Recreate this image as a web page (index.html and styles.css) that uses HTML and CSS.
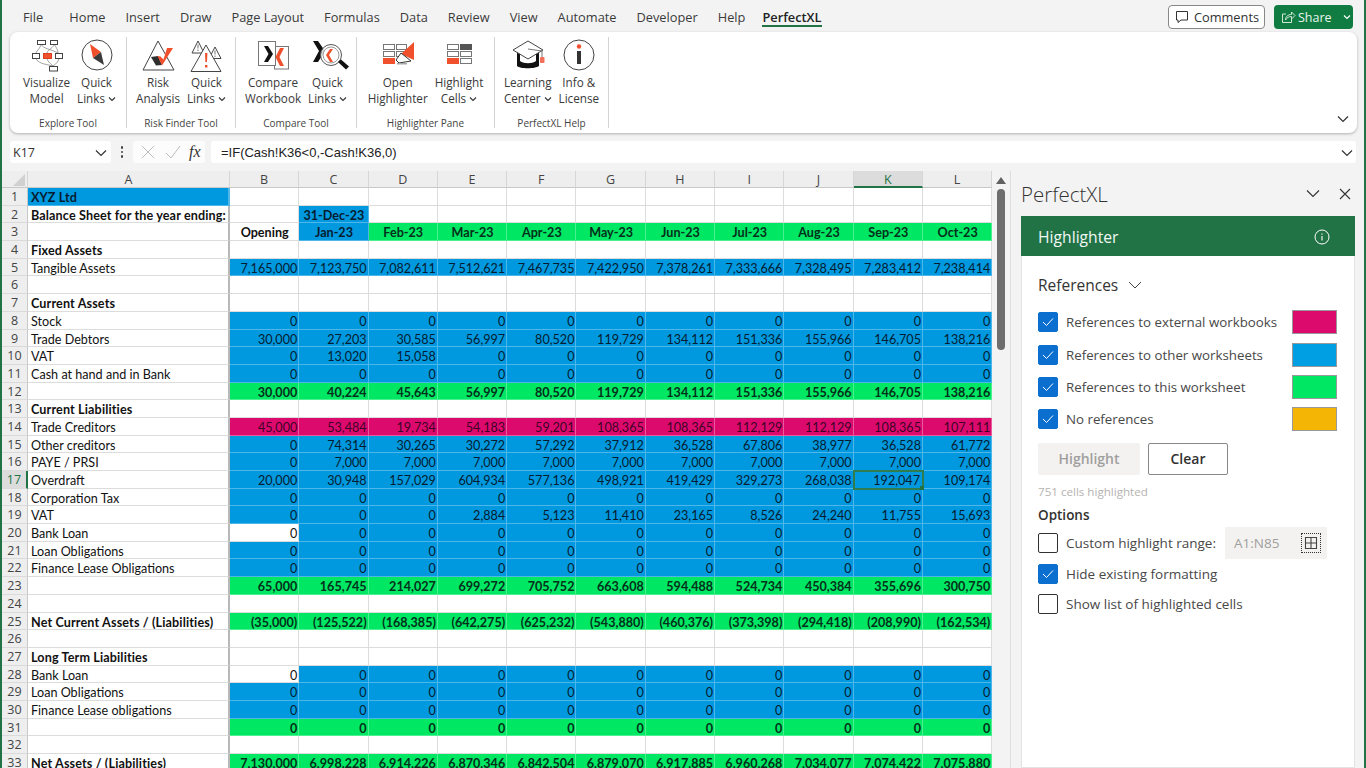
FILE: index.html
```html
<!DOCTYPE html>
<html lang="en">
<head>
<meta charset="utf-8">
<title>PerfectXL Highlighter</title>
<link rel="stylesheet" href="styles.css">
</head>
<body>
<div class="app">
  <header class="tabbar">
    <nav class="tabs">
      <span class="tab tab-file">File</span><span class="tab">Home</span><span class="tab">Insert</span><span class="tab">Draw</span><span class="tab">Page Layout</span><span class="tab">Formulas</span><span class="tab">Data</span><span class="tab">Review</span><span class="tab">View</span><span class="tab">Automate</span><span class="tab">Developer</span><span class="tab">Help</span><span class="tab tab-on">PerfectXL</span>
    </nav>
    <div class="actions">
      <button class="btn-comments"><svg class="ic" width="16" height="16" viewBox="0 0 16 16"><path d="M2.5 2.5h11v8.5H7l-3 2.6V11H2.5z" fill="none" stroke="#333" stroke-width="1"/></svg>Comments</button>
      <button class="btn-share"><svg class="ic" width="16" height="16" viewBox="0 0 16 16"><path d="M6 5H2.5v8.5h9V10M5.5 11c0-3.5 2.5-5.5 6-5.5V3l3.5 3.5L11.500 10V7.500c-2.500 0-4.500 1-6 3.500z" fill="none" stroke="#cfe8da" stroke-width="1"/></svg>Share<svg class="share-chev" width="8" height="6" viewBox="0 0 8 6"><path d="M1 1.500l3 3 3-3" fill="none" stroke="#fff" stroke-width="1.200"/></svg></button>
    </div>
  </header>

  <section class="ribbon">
    <div class="group g1">
      <div class="btns">
        <div class="rb">
          <svg class="ri" width="36" height="36" viewBox="0 0 36 36" fill="none" stroke="#444" stroke-width="1">
            <path d="M12 6C11 11 8 12 7 15M25 6c0 4-6 5-7 9M12 6c2 5 10 5 17 9M25 6c2 3 4 6 4 9M7 20c1 5 8 6 17 8M18 20c0 3 3 5 6 8M30 20c0 3-3 6-6 8" stroke="#888" stroke-width=".8"/>
            <rect x="8.500" y="2.500" width="8" height="4" fill="#fff"/><rect x="21.500" y="2.500" width="7" height="4" fill="#fff"/>
            <rect x="3.500" y="15.500" width="7" height="5" fill="#fff"/><rect x="14.500" y="15.500" width="8" height="5" fill="#f0512c" stroke="#d8401f"/><rect x="26.500" y="15.500" width="7" height="5" fill="#fff"/>
            <rect x="20.500" y="28.500" width="8" height="4.500" fill="#fff"/>
          </svg>
          <span>Visualize<br>Model</span>
        </div>
        <div class="rb">
          <svg class="ri" width="36" height="36" viewBox="0 0 36 36"><circle cx="18" cy="17" r="15" fill="#fff" stroke="#444" stroke-width="1"/><path d="M11 6l11 8-8 6z" fill="#f0512c"/><path d="M14 20l8-6 3 13z" fill="#3c3c3c"/></svg>
          <span>Quick<br>Links <svg class="cv" width="8" height="6" viewBox="0 0 8 6"><path d="M1 1.500l3 3 3-3" fill="none" stroke="#333" stroke-width="1.100"/></svg></span>
        </div>
      </div>
      <div class="glabel">Explore Tool</div>
    </div>
    <div class="group g2">
      <div class="btns">
        <div class="rb">
          <svg class="ri" width="36" height="36" viewBox="0 0 36 36"><path d="M18 3L3 32h31z" fill="#fff" stroke="#444" stroke-width="1"/><path d="M11 19l7-1 4 9-6 .5z" fill="#2f2f2f"/><path d="M22 27.500L17.500 18l3 .5 3 3L27 10h6z" fill="#f0512c"/></svg>
          <span>Risk<br>Analysis</span>
        </div>
        <div class="rb">
          <svg class="ri" width="36" height="36" viewBox="0 0 36 36" fill="#fff" stroke="#444" stroke-width="1"><path d="M10 3L4 15h12z"/><path d="M27 9l-6 11.500h12z"/><path d="M18 7L3 33.500h30z"/><path d="M17 15h2.400l-.4 9h-1.600zM17 27h2.400v2.500H17z" fill="#f0512c" stroke="none"/><path d="M9.500 6.500h1v4h-1zM9.500 11.500h1v1.500h-1zM26.500 12.500h1v4h-1zM26.500 17.500h1v1.500h-1z" fill="#777" stroke="none"/></svg>
          <span>Quick<br>Links <svg class="cv" width="8" height="6" viewBox="0 0 8 6"><path d="M1 1.500l3 3 3-3" fill="none" stroke="#333" stroke-width="1.100"/></svg></span>
        </div>
      </div>
      <div class="glabel">Risk Finder Tool</div>
    </div>
    <div class="group g3">
      <div class="btns">
        <div class="rb">
          <svg class="ri" width="36" height="36" viewBox="0 0 36 36"><rect x="19.500" y="8.500" width="14" height="22.500" fill="#fff" stroke="#777"/><rect x="3.500" y="3.500" width="17" height="24" fill="#fff" stroke="#777"/><path d="M9 8h4l5 8-5 8H9l4.500-8z" fill="#111"/><path d="M29 10h-4l-4.500 9 4.500 9h4l-4.500-9z" fill="#f0512c"/></svg>
          <span>Compare<br>Workbook</span>
        </div>
        <div class="rb">
          <svg class="ri" width="36" height="36" viewBox="0 0 36 36"><path d="M3 3h5l7 10-7 11H3l6-11z" fill="#111"/><circle cx="21" cy="17" r="10.500" fill="#fff" fill-opacity=".85" stroke="#555"/><circle cx="21" cy="17" r="8" fill="none" stroke="#999"/><path d="M23 11h-3l-4 6 4 7h3l-4-7z" fill="#f0512c"/><path d="M28 24l3-2.500 8 7-3 3z" fill="#111"/></svg>
          <span>Quick<br>Links <svg class="cv" width="8" height="6" viewBox="0 0 8 6"><path d="M1 1.500l3 3 3-3" fill="none" stroke="#333" stroke-width="1.100"/></svg></span>
        </div>
      </div>
      <div class="glabel">Compare Tool</div>
    </div>
    <div class="group g4">
      <div class="btns">
        <div class="rb">
          <svg class="ri" width="36" height="36" viewBox="0 0 36 36" fill="#fff" stroke="#777"><rect x="3.500" y="6.500" width="11" height="5"/><rect x="16.500" y="6.500" width="10" height="5"/><rect x="3.500" y="13.500" width="11" height="5"/><rect x="16.500" y="13.500" width="8" height="5"/><rect x="3.500" y="20.500" width="11" height="5" fill="#f0512c" stroke="#f0512c"/><path d="M34 4v18l-13-6z" fill="#f0512c" stroke="none"/><path d="M21 15l10 8-12 2-3-3z" fill="#fff" stroke="#333"/><path d="M17 25h10v1.500H17z" fill="#aaa" stroke="none"/></svg>
          <span>Open<br>Highlighter</span>
        </div>
        <div class="rb">
          <svg class="ri" width="36" height="36" viewBox="0 0 36 36" fill="#fff" stroke="#777"><rect x="6.500" y="6.500" width="11" height="5"/><rect x="19.500" y="6.500" width="11" height="5" fill="#555" stroke="#555"/><rect x="6.500" y="13.500" width="11" height="5"/><rect x="19.500" y="13.500" width="11" height="5"/><rect x="6.500" y="20.500" width="11" height="5" fill="#f0512c" stroke="#f0512c"/><rect x="19.500" y="20.500" width="11" height="5"/></svg>
          <span>Highlight<br>Cells <svg class="cv" width="8" height="6" viewBox="0 0 8 6"><path d="M1 1.500l3 3 3-3" fill="none" stroke="#333" stroke-width="1.100"/></svg></span>
        </div>
      </div>
      <div class="glabel">Highlighter Pane</div>
    </div>
    <div class="group g5">
      <div class="btns">
        <div class="rb">
          <svg class="ri" width="36" height="36" viewBox="0 0 36 36"><path d="M7 14v14c3 3 18 3 22 0V14z" fill="#111"/><path d="M10 17v6c4 3 12 3 16 0v-6z" fill="#fff"/><path d="M18 3L3 12l15 9 15-9z" fill="#fff" stroke="#444"/><path d="M18 11l14 2v6" fill="none" stroke="#777"/><rect x="30" y="19" width="4.500" height="6" rx="1" fill="#f0705a"/></svg>
          <span>Learning<br>Center <svg class="cv" width="8" height="6" viewBox="0 0 8 6"><path d="M1 1.500l3 3 3-3" fill="none" stroke="#333" stroke-width="1.100"/></svg></span>
        </div>
        <div class="rb">
          <svg class="ri" width="36" height="36" viewBox="0 0 36 36"><circle cx="18" cy="17" r="15" fill="#fff" stroke="#444"/><circle cx="18" cy="8.500" r="2.200" fill="#f0512c"/><rect x="16" y="13" width="4" height="13" fill="#333"/></svg>
          <span>Info &amp;<br>License</span>
        </div>
      </div>
      <div class="glabel">PerfectXL Help</div>
    </div>
    <svg class="collapse" width="12" height="8" viewBox="0 0 12 8"><path d="M1 1.500l5 5 5-5" fill="none" stroke="#333" stroke-width="1.200"/></svg>
  </section>

  <section class="fbar">
    <div class="namebox"><span>K17</span><svg width="12" height="8" viewBox="0 0 12 8"><path d="M1 1.500l5 5 5-5" fill="none" stroke="#333" stroke-width="1.200"/></svg></div>
    <div class="dots"><i></i><i></i><i></i></div>
    <div class="fxbox">
      <svg width="16" height="16" viewBox="0 0 16 16"><path d="M2 2l12 12M14 2L2 14" stroke="#bdbdbd" stroke-width="1" fill="none"/></svg>
      <svg width="16" height="16" viewBox="0 0 16 16"><path d="M1 9l5 5L15 2" stroke="#bdbdbd" stroke-width="1" fill="none"/></svg>
      <span class="fx">fx</span>
    </div>
    <div class="formula"><span>=IF(Cash!K36&lt;0,-Cash!K36,0)</span><svg width="12" height="8" viewBox="0 0 12 8"><path d="M1 1.500l5 5 5-5" fill="none" stroke="#333" stroke-width="1.200"/></svg></div>
  </section>

  <main class="work">
    <div class="sheet">
      <div class="ch corner"></div><div class="ch a-col">A</div><div class="ch">B</div><div class="ch">C</div><div class="ch">D</div><div class="ch">E</div><div class="ch">F</div><div class="ch">G</div><div class="ch">H</div><div class="ch">I</div><div class="ch">J</div><div class="ch ch-on">K</div><div class="ch">L</div>

      <div class="rh">1</div><div class="a x lb bl">XYZ Ltd</div><div class="x"></div><div class="x"></div><div class="x"></div><div class="x"></div><div class="x"></div><div class="x"></div><div class="x"></div><div class="x"></div><div class="x"></div><div class="x"></div><div class="x"></div>
      <div class="rh">2</div><div class="a x lb">Balance Sheet for the year ending:</div><div class="x"></div><div class="x bl t">31-Dec-23</div><div class="x"></div><div class="x"></div><div class="x"></div><div class="x"></div><div class="x"></div><div class="x"></div><div class="x"></div><div class="x"></div><div class="x"></div>
      <div class="rh">3</div><div class="a x"></div><div class="x t">Opening</div><div class="x bl t">Jan-23</div><div class="x gr t">Feb-23</div><div class="x gr t">Mar-23</div><div class="x gr t">Apr-23</div><div class="x gr t">May-23</div><div class="x gr t">Jun-23</div><div class="x gr t">Jul-23</div><div class="x gr t">Aug-23</div><div class="x gr t">Sep-23</div><div class="x gr t">Oct-23</div>
      <div class="rh">4</div><div class="a x lb">Fixed Assets</div><div class="x"></div><div class="x"></div><div class="x"></div><div class="x"></div><div class="x"></div><div class="x"></div><div class="x"></div><div class="x"></div><div class="x"></div><div class="x"></div><div class="x"></div>
      <div class="rh">5</div><div class="a x">Tangible Assets</div><div class="n bl">7,165,000</div><div class="n bl">7,123,750</div><div class="n bl">7,082,611</div><div class="n bl">7,512,621</div><div class="n bl">7,467,735</div><div class="n bl">7,422,950</div><div class="n bl">7,378,261</div><div class="n bl">7,333,666</div><div class="n bl">7,328,495</div><div class="n bl">7,283,412</div><div class="n bl">7,238,414</div>
      <div class="rh">6</div><div class="a x"></div><div class="x"></div><div class="x"></div><div class="x"></div><div class="x"></div><div class="x"></div><div class="x"></div><div class="x"></div><div class="x"></div><div class="x"></div><div class="x"></div><div class="x"></div>
      <div class="rh">7</div><div class="a x lb">Current Assets</div><div class="x"></div><div class="x"></div><div class="x"></div><div class="x"></div><div class="x"></div><div class="x"></div><div class="x"></div><div class="x"></div><div class="x"></div><div class="x"></div><div class="x"></div>
      <div class="rh">8</div><div class="a x">Stock</div><div class="n bl">0</div><div class="n bl">0</div><div class="n bl">0</div><div class="n bl">0</div><div class="n bl">0</div><div class="n bl">0</div><div class="n bl">0</div><div class="n bl">0</div><div class="n bl">0</div><div class="n bl">0</div><div class="n bl">0</div>
      <div class="rh">9</div><div class="a x">Trade Debtors</div><div class="n bl">30,000</div><div class="n bl">27,203</div><div class="n bl">30,585</div><div class="n bl">56,997</div><div class="n bl">80,520</div><div class="n bl">119,729</div><div class="n bl">134,112</div><div class="n bl">151,336</div><div class="n bl">155,966</div><div class="n bl">146,705</div><div class="n bl">138,216</div>
      <div class="rh">10</div><div class="a x">VAT</div><div class="n bl">0</div><div class="n bl">13,020</div><div class="n bl">15,058</div><div class="n bl">0</div><div class="n bl">0</div><div class="n bl">0</div><div class="n bl">0</div><div class="n bl">0</div><div class="n bl">0</div><div class="n bl">0</div><div class="n bl">0</div>
      <div class="rh">11</div><div class="a x">Cash at hand and in Bank</div><div class="n bl">0</div><div class="n bl">0</div><div class="n bl">0</div><div class="n bl">0</div><div class="n bl">0</div><div class="n bl">0</div><div class="n bl">0</div><div class="n bl">0</div><div class="n bl">0</div><div class="n bl">0</div><div class="n bl">0</div>
      <div class="rh">12</div><div class="a x"></div><div class="n gr b">30,000</div><div class="n gr b">40,224</div><div class="n gr b">45,643</div><div class="n gr b">56,997</div><div class="n gr b">80,520</div><div class="n gr b">119,729</div><div class="n gr b">134,112</div><div class="n gr b">151,336</div><div class="n gr b">155,966</div><div class="n gr b">146,705</div><div class="n gr b">138,216</div>
      <div class="rh">13</div><div class="a x lb">Current Liabilities</div><div class="x"></div><div class="x"></div><div class="x"></div><div class="x"></div><div class="x"></div><div class="x"></div><div class="x"></div><div class="x"></div><div class="x"></div><div class="x"></div><div class="x"></div>
      <div class="rh">14</div><div class="a x">Trade Creditors</div><div class="n pk">45,000</div><div class="n pk">53,484</div><div class="n pk">19,734</div><div class="n pk">54,183</div><div class="n pk">59,201</div><div class="n pk">108,365</div><div class="n pk">108,365</div><div class="n pk">112,129</div><div class="n pk">112,129</div><div class="n pk">108,365</div><div class="n pk">107,111</div>
      <div class="rh">15</div><div class="a x">Other creditors</div><div class="n bl">0</div><div class="n bl">74,314</div><div class="n bl">30,265</div><div class="n bl">30,272</div><div class="n bl">57,292</div><div class="n bl">37,912</div><div class="n bl">36,528</div><div class="n bl">67,806</div><div class="n bl">38,977</div><div class="n bl">36,528</div><div class="n bl">61,772</div>
      <div class="rh">16</div><div class="a x">PAYE / PRSI</div><div class="n bl">0</div><div class="n bl">7,000</div><div class="n bl">7,000</div><div class="n bl">7,000</div><div class="n bl">7,000</div><div class="n bl">7,000</div><div class="n bl">7,000</div><div class="n bl">7,000</div><div class="n bl">7,000</div><div class="n bl">7,000</div><div class="n bl">7,000</div>
      <div class="rh rh-on">17</div><div class="a x">Overdraft</div><div class="n bl">20,000</div><div class="n bl">30,948</div><div class="n bl">157,029</div><div class="n bl">604,934</div><div class="n bl">577,136</div><div class="n bl">498,921</div><div class="n bl">419,429</div><div class="n bl">329,273</div><div class="n bl">268,038</div><div class="n bl active">192,047</div><div class="n bl">109,174</div>
      <div class="rh">18</div><div class="a x">Corporation Tax</div><div class="n bl">0</div><div class="n bl">0</div><div class="n bl">0</div><div class="n bl">0</div><div class="n bl">0</div><div class="n bl">0</div><div class="n bl">0</div><div class="n bl">0</div><div class="n bl">0</div><div class="n bl">0</div><div class="n bl">0</div>
      <div class="rh">19</div><div class="a x">VAT</div><div class="n bl">0</div><div class="n bl">0</div><div class="n bl">0</div><div class="n bl">2,884</div><div class="n bl">5,123</div><div class="n bl">11,410</div><div class="n bl">23,165</div><div class="n bl">8,526</div><div class="n bl">24,240</div><div class="n bl">11,755</div><div class="n bl">15,693</div>
      <div class="rh">20</div><div class="a x">Bank Loan</div><div class="n">0</div><div class="n bl">0</div><div class="n bl">0</div><div class="n bl">0</div><div class="n bl">0</div><div class="n bl">0</div><div class="n bl">0</div><div class="n bl">0</div><div class="n bl">0</div><div class="n bl">0</div><div class="n bl">0</div>
      <div class="rh">21</div><div class="a x">Loan Obligations</div><div class="n bl">0</div><div class="n bl">0</div><div class="n bl">0</div><div class="n bl">0</div><div class="n bl">0</div><div class="n bl">0</div><div class="n bl">0</div><div class="n bl">0</div><div class="n bl">0</div><div class="n bl">0</div><div class="n bl">0</div>
      <div class="rh">22</div><div class="a x">Finance Lease Obligations</div><div class="n bl">0</div><div class="n bl">0</div><div class="n bl">0</div><div class="n bl">0</div><div class="n bl">0</div><div class="n bl">0</div><div class="n bl">0</div><div class="n bl">0</div><div class="n bl">0</div><div class="n bl">0</div><div class="n bl">0</div>
      <div class="rh">23</div><div class="a x"></div><div class="n gr b">65,000</div><div class="n gr b">165,745</div><div class="n gr b">214,027</div><div class="n gr b">699,272</div><div class="n gr b">705,752</div><div class="n gr b">663,608</div><div class="n gr b">594,488</div><div class="n gr b">524,734</div><div class="n gr b">450,384</div><div class="n gr b">355,696</div><div class="n gr b">300,750</div>
      <div class="rh">24</div><div class="a x"></div><div class="x"></div><div class="x"></div><div class="x"></div><div class="x"></div><div class="x"></div><div class="x"></div><div class="x"></div><div class="x"></div><div class="x"></div><div class="x"></div><div class="x"></div>
      <div class="rh">25</div><div class="a x lb">Net Current Assets / (Liabilities)</div><div class="n gr b">(35,000)</div><div class="n gr b">(125,522)</div><div class="n gr b">(168,385)</div><div class="n gr b">(642,275)</div><div class="n gr b">(625,232)</div><div class="n gr b">(543,880)</div><div class="n gr b">(460,376)</div><div class="n gr b">(373,398)</div><div class="n gr b">(294,418)</div><div class="n gr b">(208,990)</div><div class="n gr b">(162,534)</div>
      <div class="rh">26</div><div class="a x"></div><div class="x"></div><div class="x"></div><div class="x"></div><div class="x"></div><div class="x"></div><div class="x"></div><div class="x"></div><div class="x"></div><div class="x"></div><div class="x"></div><div class="x"></div>
      <div class="rh">27</div><div class="a x lb">Long Term Liabilities</div><div class="x"></div><div class="x"></div><div class="x"></div><div class="x"></div><div class="x"></div><div class="x"></div><div class="x"></div><div class="x"></div><div class="x"></div><div class="x"></div><div class="x"></div>
      <div class="rh">28</div><div class="a x">Bank Loan</div><div class="n">0</div><div class="n bl">0</div><div class="n bl">0</div><div class="n bl">0</div><div class="n bl">0</div><div class="n bl">0</div><div class="n bl">0</div><div class="n bl">0</div><div class="n bl">0</div><div class="n bl">0</div><div class="n bl">0</div>
      <div class="rh">29</div><div class="a x">Loan Obligations</div><div class="n bl">0</div><div class="n bl">0</div><div class="n bl">0</div><div class="n bl">0</div><div class="n bl">0</div><div class="n bl">0</div><div class="n bl">0</div><div class="n bl">0</div><div class="n bl">0</div><div class="n bl">0</div><div class="n bl">0</div>
      <div class="rh">30</div><div class="a x">Finance Lease obligations</div><div class="n bl">0</div><div class="n bl">0</div><div class="n bl">0</div><div class="n bl">0</div><div class="n bl">0</div><div class="n bl">0</div><div class="n bl">0</div><div class="n bl">0</div><div class="n bl">0</div><div class="n bl">0</div><div class="n bl">0</div>
      <div class="rh">31</div><div class="a x"></div><div class="n gr b">0</div><div class="n gr b">0</div><div class="n gr b">0</div><div class="n gr b">0</div><div class="n gr b">0</div><div class="n gr b">0</div><div class="n gr b">0</div><div class="n gr b">0</div><div class="n gr b">0</div><div class="n gr b">0</div><div class="n gr b">0</div>
      <div class="rh">32</div><div class="a x"></div><div class="x"></div><div class="x"></div><div class="x"></div><div class="x"></div><div class="x"></div><div class="x"></div><div class="x"></div><div class="x"></div><div class="x"></div><div class="x"></div><div class="x"></div>
      <div class="rh">33</div><div class="a x lb">Net Assets / (Liabilities)</div><div class="n gr b">7,130,000</div><div class="n gr b">6,998,228</div><div class="n gr b">6,914,226</div><div class="n gr b">6,870,346</div><div class="n gr b">6,842,504</div><div class="n gr b">6,879,070</div><div class="n gr b">6,917,885</div><div class="n gr b">6,960,268</div><div class="n gr b">7,034,077</div><div class="n gr b">7,074,422</div><div class="n gr b">7,075,880</div>
    </div>

    <div class="vscroll"><svg width="10" height="7" viewBox="0 0 10 7"><path d="M5 0l5 7H0z" fill="#606060"/></svg><div class="thumb"></div></div>

    <aside class="pane">
      <div class="pane-head"><span class="pane-title">PerfectXL</span>
        <svg width="14" height="9" viewBox="0 0 14 9"><path d="M1 1.500l6 6 6-6" fill="none" stroke="#333" stroke-width="1.100"/></svg>
        <svg width="12" height="12" viewBox="0 0 12 12"><path d="M1 1l10 10M11 1L1 11" fill="none" stroke="#333" stroke-width="1.100"/></svg>
      </div>
      <div class="pane-banner"><span>Highlighter</span><svg width="16" height="16" viewBox="0 0 16 16"><circle cx="8" cy="8" r="7" fill="none" stroke="#fff"/><path d="M8 7v4.500M8 4.500v1.200" stroke="#fff" stroke-width="1.100"/></svg></div>
      <div class="pane-body">
        <div class="refs-head">References <svg width="14" height="8" viewBox="0 0 14 8"><path d="M1 1l6 6 6-6" fill="none" stroke="#444" stroke-width="1"/></svg></div>
        <div class="ref-row"><span class="cb on"><svg width="12" height="10" viewBox="0 0 12 10"><path d="M1 5l3.500 3.500L11 1.500" fill="none" stroke="#fff" stroke-width="1"/></svg></span><span class="ref-text">References to external workbooks</span><span class="swatch s-pink"></span></div>
        <div class="ref-row"><span class="cb on"><svg width="12" height="10" viewBox="0 0 12 10"><path d="M1 5l3.500 3.500L11 1.500" fill="none" stroke="#fff" stroke-width="1"/></svg></span><span class="ref-text">References to other worksheets</span><span class="swatch s-blue"></span></div>
        <div class="ref-row"><span class="cb on"><svg width="12" height="10" viewBox="0 0 12 10"><path d="M1 5l3.500 3.500L11 1.500" fill="none" stroke="#fff" stroke-width="1"/></svg></span><span class="ref-text">References to this worksheet</span><span class="swatch s-green"></span></div>
        <div class="ref-row"><span class="cb on"><svg width="12" height="10" viewBox="0 0 12 10"><path d="M1 5l3.500 3.500L11 1.500" fill="none" stroke="#fff" stroke-width="1"/></svg></span><span class="ref-text">No references</span><span class="swatch s-amber"></span></div>
        <div class="pane-btns"><button class="b-high">Highlight</button><button class="b-clear">Clear</button></div>
        <div class="count">751 cells highlighted</div>
        <div class="opts">Options</div>
        <div class="opt-row opt-range"><span class="cb"></span><span class="ref-text">Custom highlight range:</span>
          <div class="range"><span>A1:N85</span><span class="range-ic"><svg width="14" height="14" viewBox="0 0 14 14"><path d="M1.500 1.500h11v11h-11zM7 1.500v11M1.500 7h11" fill="none" stroke="#444" stroke-width="1.100"/></svg></span></div>
        </div>
        <div class="opt-row"><span class="cb on"><svg width="12" height="10" viewBox="0 0 12 10"><path d="M1 5l3.500 3.500L11 1.500" fill="none" stroke="#fff" stroke-width="1"/></svg></span><span class="ref-text">Hide existing formatting</span></div>
        <div class="opt-row"><span class="cb"></span><span class="ref-text">Show list of highlighted cells</span></div>
      </div>
    </aside>
  </main>
</div>
</body>
</html>
```
FILE: styles.css
```css
* { box-sizing: border-box; }
html, body { margin: 0; padding: 0; height: 100%; overflow: hidden; }
body { font-family: "Open Sans", "Noto Sans", sans-serif; color: #333; background: #f3f3f3; }
button { font-family: inherit; cursor: default; }

.app { width: 1366px; height: 768px; overflow: hidden; display: flex; flex-direction: column; border-left: 2px solid #217346; border-right: 2px solid #217346; background: #f3f3f3; }

/* tab bar */
.tabbar { height: 32px; flex: none; display: flex; justify-content: space-between; padding: 5px 11px 0 21px; }
.tabs { display: flex; gap: 20px; font-size: 12.8px; align-items: flex-start; }
.tab { height: 22px; line-height: 24px; color: #3b3b3b; white-space: nowrap; }
.tab-file { margin-right: 6px; }
.tab-on { color: #222; font-weight: 600; border-bottom: 2px solid #217346; margin-left: -3px; }
.actions { display: flex; gap: 9px; align-items: flex-start; }
.ic { flex: none; }
.btn-comments { width: 97px; height: 24px; padding: 0; display: flex; align-items: center; justify-content: center; gap: 4px; background: #fff; border: 1px solid #8a8886; border-radius: 4px; font-size: 12.8px; color: #333; }
.btn-share { width: 79px; height: 24px; padding: 0 0 0 6px; display: flex; align-items: center; gap: 2px; background: #107c41; border: 0; border-radius: 4px; font-size: 12.5px; color: #e9f4ee; }
.share-chev { margin-left: 9px; }

/* ribbon */
.ribbon { position: relative; height: 101px; flex: none; margin: 0 7px 0 8px; display: flex; background: #fff; border-radius: 8px; box-shadow: 0 1px 3px rgba(0,0,0,.28); padding-top: 5px; }
.group { height: 91px; display: flex; flex-direction: column; border-right: 1px solid #d4d4d4; flex: none; }
.g1 { width: 117px; } .g2 { width: 109px; } .g3 { width: 121px; } .g4 { width: 138px; } .g5 { width: 114px; }
.btns { height: 77px; flex: none; display: flex; justify-content: center; gap: 7px; }
.g1 .btns { padding-left: 3px; }
.rb { display: flex; flex-direction: column; align-items: center; text-align: center; font-size: 11.7px; line-height: 16px; color: #3a3a3a; white-space: nowrap; }
.ri { flex: none; margin-top: 1px; overflow: visible; }
.cv { margin-left: 0; vertical-align: 1px; }
.glabel { text-align: center; font-size: 10px; line-height: 14px; color: #444; margin-top: 2px; white-space: nowrap; }
.collapse { position: absolute; right: 8px; bottom: 10px; }

/* formula bar */
.fbar { height: 22px; flex: none; margin: 8px 8px 0; display: flex; font-size: 12.5px; }
.namebox { width: 101px; background: #fff; border-radius: 3px; display: flex; align-items: center; justify-content: space-between; padding: 1px 4px 0 3px; color: #333; }
.dots { width: 22px; display: flex; flex-direction: column; align-items: center; justify-content: center; gap: 2px; }
.dots i { width: 2.500px; height: 2.500px; background: #444; border-radius: 50%; display: block; }
.fxbox { width: 72px; background: #fcfcfc; border-radius: 3px; display: flex; align-items: center; gap: 9px; padding-left: 7px; }
.fx { font-family: "Liberation Serif", serif; font-style: italic; font-size: 16px; color: #333; margin-left: -1px; }
.formula { flex: 1; margin-left: 6px; background: #fff; border-radius: 3px; display: flex; align-items: center; justify-content: space-between; padding: 1px 3px 0 10px; font-family: "Liberation Sans", sans-serif; font-size: 13px; color: #222; }

/* work area */
.work { flex: 1; min-height: 0; margin-top: 8px; display: flex; }
.sheet { width: 991px; flex: none; display: grid; grid-template-columns: 26px 202px repeat(11, 69.3px); grid-template-rows: 17px repeat(33, 17.7px); align-content: start; font-family: Lato, "Open Sans", sans-serif; font-size: 12.6px; color: #111; }
.ch { background: #eeeeee; border-right: 1px solid #d6d6d6; border-bottom: 1px solid #c8c8c8; text-align: center; font-family: "Open Sans", sans-serif; font-size: 12.5px; line-height: 18px; color: #444; }
.corner { position: relative; }
.corner::after { content: ""; position: absolute; right: 2px; bottom: 1px; border-style: solid; border-width: 0 0 12px 12px; border-color: transparent transparent #d0d0d0 transparent; }
.ch-on { background: #dcdcdc; color: #217346; border-bottom: 2px solid #217346; }
.rh { background: #eeeeee; border-right: 1px solid #c8c8c8; border-bottom: 1px solid #dadada; text-align: center; font-family: "Open Sans", sans-serif; font-size: 12.5px; line-height: 18px; color: #444; }
.rh-on { background: #dcdcdc; color: #217346; border-right: 2px solid #217346; }
.x, .n { background: #fff; border-right: 1px solid #dcdcdc; border-bottom: 1px solid #dcdcdc; padding: 1px 2px 0 3px; line-height: 17px; white-space: nowrap; overflow: hidden; }
.n { text-align: right; padding-right: 1px; }
.a { border-right: 2px solid #b8b8b8; }
.lb { font-weight: 700; letter-spacing: .13px; }
.t { font-weight: 700; text-align: center; }
.b { font-weight: 700; }
.bl { background: #0098df; color: #051c30; border-right-color: #4db7ea; border-bottom-color: #4db7ea; }
.gr { background: #00e763; color: #03301a; border-right-color: #4df091; border-bottom-color: #4df091; }
.pk { background: #dd0a6e; color: #3d0326; border-right-color: #e85a9c; border-bottom-color: #e85a9c; }
.active { position: relative; overflow: visible; outline: 2px solid #2f7d4f; outline-offset: -1px; z-index: 1; padding-right: 2px; }
.active::after { content: ""; position: absolute; right: -2px; bottom: -2px; width: 4px; height: 4px; background: #217346; }

.vscroll { width: 17px; flex: none; display: flex; flex-direction: column; align-items: center; padding: 6px 2px 0 0; }
.thumb { width: 8px; height: 161px; margin-top: 5px; background: #6e6e6e; border-radius: 4px; }

/* task pane */
.pane { flex: 1; min-width: 0; border-left: 1px solid #dedede; padding: 0 9px 0 10px; display: flex; flex-direction: column; background: #f3f3f3; }
.pane-head { height: 45px; flex: none; display: flex; align-items: center; gap: 19px; padding-right: 4px; }
.pane-title { flex: 1; font-size: 20.5px; font-weight: 300; color: #333; }
.pane-banner { height: 40px; flex: none; background: #217346; color: #f2f8f4; display: flex; align-items: center; justify-content: space-between; padding: 1px 25px 0 17px; font-size: 15.7px; }
.pane-body { flex: 1; background: #fff; border: 1px solid #e3e3e3; border-top: 0; padding: 17px 17px 0 16px; }
.refs-head { height: 24px; display: flex; align-items: center; gap: 10px; font-size: 15.500px; color: #333; margin-bottom: 9px; }
.ref-row { height: 32.400px; display: flex; align-items: center; font-size: 13.3px; color: #484848; }
.cb { width: 20px; height: 20px; flex: none; border: 1px solid #323130; border-radius: 2px; display: flex; align-items: center; justify-content: center; margin-right: 8px; background: #fff; }
.cb.on { background: #0b6fd0; border-color: #0b6fd0; }
.ref-text { white-space: nowrap; }
.swatch { width: 45px; height: 24px; margin-left: auto; border: 1px solid #999; flex: none; }
.s-pink { background: #dd0a6e; } .s-blue { background: #009fe3; } .s-green { background: #00e763; } .s-amber { background: #f5b505; }
.pane-btns { display: flex; gap: 8px; margin-top: 7px; }
.b-high { width: 102px; height: 32px; background: #f3f2f1; border: 0; border-radius: 2px; font-size: 14px; font-weight: 600; color: #a19f9d; }
.b-clear { width: 80px; height: 32px; background: #fff; border: 1px solid #8a8886; border-radius: 2px; font-size: 14px; font-weight: 600; color: #323130; padding: 0; }
.count { margin-top: 9px; font-size: 11.6px; line-height: 16px; color: #b5b3b1; }
.opts { margin-top: 5px; font-size: 13.500px; font-weight: 600; line-height: 20px; color: #323130; }
.opt-row { height: 30.400px; display: flex; align-items: center; font-size: 13.5px; color: #484848; }
.opt-range { height: 31px; margin-top: 3px; }
.range { width: 102px; height: 32px; flex: none; margin-left: auto; margin-right: 10px; padding: 0 6px 0 9px; display: flex; align-items: center; justify-content: space-between; background: #f3f2f1; color: #a19f9d; font-size: 13.5px; }
.range-ic { width: 20px; height: 20px; border: 1px dotted #333; display: flex; align-items: center; justify-content: center; }
```
